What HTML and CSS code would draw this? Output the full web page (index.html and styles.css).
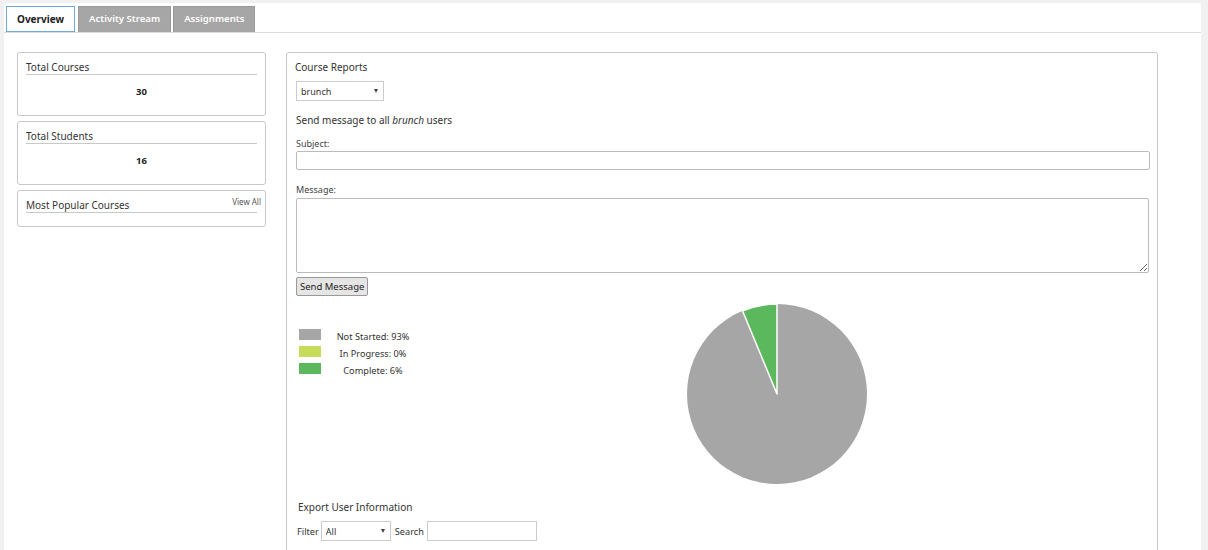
FILE: index.html
```html
<!DOCTYPE html>
<html>
<title>Dashboard</title>

<head>
    <meta charset="utf-8">
    <link rel="stylesheet" href="styles.css">
</head>

<body>
    <div class="panel">
        <div class="tabs">
            <div class="tab active">Overview</div>
            <div class="tab">Activity Stream</div>
            <div class="tab">Assignments</div>
        </div>
        <div class="content">
            <div class="sidebar">
                <div class="card">
                    <div class="card-title">Total Courses</div>
                    <div class="card-value">30</div>
                </div>
                <div class="card">
                    <div class="card-title">Total Students</div>
                    <div class="card-value">16</div>
                </div>
                <div class="card card-small">
                    <a class="view-all" href="#">View All</a>
                    <div class="card-title">Most Popular Courses</div>
                </div>
            </div>

            <div class="reports">
                <div class="reports-title">Course Reports</div>
                <div class="select-wrap course-select">
                    <select>
                        <option>brunch</option>
                    </select>
                    <span class="arrow"></span>
                </div>
                <p class="send-text">Send message to all <em>brunch</em> users</p>
                <label class="field-label">Subject:</label>
                <input class="subject" type="text" />
                <label class="field-label msg-label">Message:</label>
                <textarea class="message"></textarea>
                <button class="send">Send Message</button>

                <div class="chart">
                    <table class="legend">
                        <tr>
                            <td><span class="swatch gray"></span></td>
                            <td>Not Started: 93%</td>
                        </tr>
                        <tr>
                            <td><span class="swatch lime"></span></td>
                            <td>In Progress: 0%</td>
                        </tr>
                        <tr>
                            <td><span class="swatch green"></span></td>
                            <td>Complete: 6%</td>
                        </tr>
                    </table>
                    <svg class="pie" width="182" height="182" viewBox="-91 -91 182 182">
                        <circle cx="0" cy="0" r="90" fill="#a6a6a6" />
                        <path d="M0,0 L0,-90 A90,90 0 0,0 -34.44,-83.15 Z" fill="#5cb85c" stroke="#fff" stroke-width="1.5" stroke-linejoin="round" />
                    </svg>
                </div>

                <div class="export-title">Export User Information</div>
                <div class="export-row">
                    <span>Filter</span>
                    <div class="select-wrap filter-select">
                        <select>
                            <option>All</option>
                        </select>
                        <span class="arrow"></span>
                    </div>
                    <span>Search</span>
                    <input class="search" type="text" />
                </div>
            </div>
        </div>
    </div>
</body>

</html>
```

FILE: styles.css
```css
body {
    font-family: "Noto Sans", "Open Sans", sans-serif;
    font-size: 10px;
    color: #333;
    background-color: #f1f1f1;
    margin: 0;
    padding: 3px 7px 0 4px;
    height: 550px;
    box-sizing: border-box;
    overflow: hidden;
}

.panel {
    background-color: #fff;
    height: 100%;
}

.tabs {
    display: flex;
    padding: 3px 0 0 2px;
    border-bottom: 1px solid #dcdcdc;
}

.tab {
    height: 26px;
    line-height: 24px;
    padding: 0 10px;
    margin-right: 2px;
    box-sizing: border-box;
    background-color: #a6a6a6;
    color: #fff;
    font-size: 9.6px;
    font-weight: 600;
    border: 1px solid #999;
    border-bottom: none;
}

.tab.active {
    background-color: #fff;
    color: #222;
    font-size: 10px;
    font-weight: bold;
    border: 1px solid #6fa8dc;
    padding: 0 10px;
    margin-right: 3px;
}

.content {
    display: flex;
    align-items: flex-start;
    padding: 19px 0 0 13px;
}

.sidebar {
    width: 249px;
    margin-right: 20px;
}

.card {
    position: relative;
    border: 1px solid #c8c8c8;
    border-radius: 3px;
    padding: 8px 8px 0 8px;
    height: 64px;
    box-sizing: border-box;
    margin-bottom: 5px;
}

.card-small {
    height: 37px;
}

.card-title {
    line-height: 12px;
    color: #333;
    padding-bottom: 1px;
    border-bottom: 1px solid #c8c8c8;
}

.card-value {
    text-align: center;
    font-weight: bold;
    font-size: 9.5px;
    line-height: 12px;
    color: #222;
    margin-top: 11px;
}

.view-all {
    position: absolute;
    top: 5px;
    right: 4px;
    font-size: 8px;
    color: #555;
    text-decoration: none;
}

.reports {
    width: 872px;
    height: 520px;
    box-sizing: border-box;
    border: 1px solid #c8c8c8;
    border-radius: 3px;
    padding: 7px 8px 0 9px;
    display: flex;
    flex-direction: column;
    align-items: flex-start;
}

.reports-title {
    margin-left: -1px;
    line-height: 14px;
}

.select-wrap {
    position: relative;
    height: 20px;
}

.select-wrap select {
    appearance: none;
    width: 100%;
    height: 100%;
    padding: 0 0 0 4px;
    font-family: inherit;
    font-size: 9px;
    color: #333;
    border: 1px solid #ccc;
    border-radius: 0;
    background-color: #fff;
}

.arrow {
    position: absolute;
    right: 6px;
    top: 8px;
    border-left: 2.5px solid transparent;
    border-right: 2.5px solid transparent;
    border-top: 4px solid #444;
}

.course-select {
    margin-top: 7px;
    width: 88px;
}

.send-text {
    margin: 12px 0 0 0;
    line-height: 14px;
}

.field-label {
    margin-top: 11px;
    font-size: 9px;
    line-height: 12px;
    color: #444;
}

.msg-label {
    margin-top: 14px;
}

.subject {
    width: 854px;
    height: 19px;
    box-sizing: border-box;
    border: 1px solid #bbb;
    border-radius: 2px;
    margin: 1px 0 0 0;
}

.message {
    width: 853px;
    height: 75px;
    box-sizing: border-box;
    border: 1px solid #bbb;
    border-radius: 2px;
    margin: 2px 0 0 0;
}

.send {
    margin-top: 4px;
    height: 19px;
    padding: 0 3px;
    font-family: inherit;
    font-size: 9.5px;
    color: #222;
    background-color: #e5e5e5;
    border: 1px solid #999;
    border-radius: 2px;
}

.chart {
    display: flex;
    align-items: flex-start;
    margin-top: 7px;
}

.legend {
    border-collapse: collapse;
    margin: 26px 0 0 3px;
    font-size: 9.2px;
}

.legend td {
    padding: 0 0 6px 0;
    text-align: center;
    line-height: 11px;
}

.legend td + td {
    width: 100px;
    padding: 2px 0 4px 2px;
}

.swatch {
    display: block;
    width: 22px;
    height: 11px;
}

.swatch.gray {
    background-color: #a6a6a6;
}

.swatch.lime {
    background-color: #c6dc5a;
}

.swatch.green {
    background-color: #5cb85c;
}

.pie {
    margin-left: 263px;
}

.export-title {
    margin-top: 15px;
    margin-left: 2px;
    line-height: 14px;
}

.export-row {
    display: flex;
    align-items: center;
    margin-top: 7px;
    margin-left: 1px;
    font-size: 9.2px;
}

.filter-select {
    width: 70px;
    margin: 0 4px 0 2px;
}

.search {
    width: 110px;
    height: 20px;
    box-sizing: border-box;
    margin-left: 3px;
    border: 1px solid #ccc;
}
```
